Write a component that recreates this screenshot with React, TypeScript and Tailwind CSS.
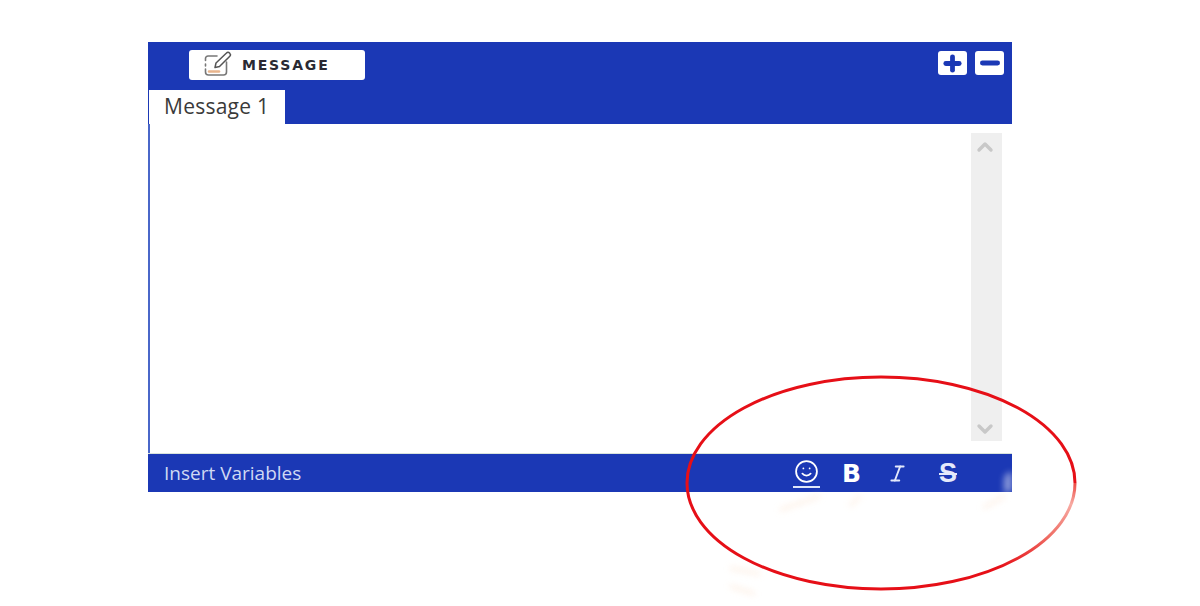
import { Minus, Plus, ChevronUp, ChevronDown, Smile, Italic } from "lucide-react";

const font = "font-['Open_Sans','Noto_Sans',sans-serif]";

// ─── Pencil-on-note icon in the header button ─────────────────────────────────

function NoteIcon() {
  return (
    <svg width="30" height="28" viewBox="0 0 30 28" fill="none">
      <path
        d="M15 5H6a2.5 2.5 0 0 0-2.5 2.5v2M3.5 13v2M3.5 18v3a3 3 0 0 0 3 3h15a3 3 0 0 0 3-3v-10"
        stroke="#777"
        strokeWidth="1.6"
        strokeLinecap="round"
      />
      <path d="M7 20.5h10" stroke="#e8b48c" strokeWidth="2.5" strokeLinecap="round" />
      <path
        d="M13 16.5l1-4.5L24.5 2a2 2 0 0 1 3 0l.3.4a2 2 0 0 1 0 2.8L17.5 15.5z"
        stroke="#555"
        strokeWidth="1.5"
        strokeLinejoin="round"
      />
    </svg>
  );
}

function Scrollbar() {
  return (
    <div className="w-[31px] flex flex-col items-center justify-between bg-[#efefef] pt-[2px] pb-0">
      <ChevronUp size={24} strokeWidth={3.4} className="text-[#c8c8c8] -ml-[3px]" />
      <ChevronDown size={24} strokeWidth={3.4} className="text-[#c8c8c8] -ml-[3px]" />
    </div>
  );
}

function Footer() {
  return (
    <div className="relative h-[39px] flex items-center justify-between bg-[#1b38b5] pl-4 border-t border-[#d9e3dc]">
      <span className={`${font} text-[19px] text-[#cfd8f3]`}>Insert Variables</span>
      <div className="flex items-center text-white mr-[54px]">
        <span className="flex flex-col items-center border-b-2 border-[#dfe6fa] pb-0.5 w-[27px]">
          <Smile size={25} strokeWidth={1.7} />
        </span>
        <span className="ml-[22px] w-[20px] font-['DejaVu_Sans',sans-serif] font-bold text-[25px] leading-none">B</span>
        <span className="ml-[25px] text-[#e4e9fb]">
          <Italic size={21} strokeWidth={2.2} />
        </span>
        <span className="ml-[31px] w-[19px] font-['Liberation_Sans',sans-serif] font-bold line-through text-[27px] leading-none text-[#e4e9fb]">
          S
        </span>
      </div>
      {/* Eraser smudge at the bar's right end */}
      <span className="absolute right-0 top-[18px] bottom-0 w-[8px] rounded-tl-full bg-white/50 blur-[3px]" />
    </div>
  );
}

export default function App() {
  return (
    <div className="relative w-[1200px] h-[606px] bg-white overflow-hidden pt-[42px] pl-[148px]">
      <div className="w-[864px] h-[450px] flex flex-col border-l-2 border-[#4a67c9]">
        {/* Header with the title button and the tab strip */}
        <div className="h-[82px] flex flex-col justify-between bg-[#1b38b5] -ml-[2px]">
          <div className="flex items-start justify-between pt-[8px] pl-[41px] pr-[8px]">
            <div className="w-[176px] h-[30px] flex items-center gap-[10px] rounded-[3px] bg-white pl-[13px]">
              <NoteIcon />
              <span className="font-['DejaVu_Sans',sans-serif] font-bold text-[14px] tracking-[1.8px] text-[#2a2a33]">
                MESSAGE
              </span>
            </div>
            <div className="flex gap-[8px] pt-[1px]">
              <span className="w-[29px] h-[24px] flex items-center justify-center rounded-[3px] bg-white text-[#1b38b5]">
                <Plus size={23} strokeWidth={5} />
              </span>
              <span className="w-[29px] h-[24px] flex items-center justify-center rounded-[3px] bg-white text-[#1b38b5]">
                <Minus size={26} strokeWidth={4.5} />
              </span>
            </div>
          </div>
          <div className={`${font} ml-[1px] w-[136px] h-[34px] flex items-center pl-[15px] bg-white text-[21px] tracking-[0.25px] text-[#3a3a3a]`}>
            Message 1
          </div>
        </div>

        {/* Empty message area */}
        <div className="flex-1 flex justify-end bg-white pt-[9px] pr-[10px] pb-[12px]">
          <Scrollbar />
        </div>

        <div className="-ml-[2px]">
          <Footer />
        </div>
      </div>

      {/* Red hand-drawn ellipse over the toolbar, with its eraser marks */}
      <svg className="absolute left-[670px] top-[360px]" width="420" height="246" viewBox="0 0 420 246" fill="none">
        <defs>
          <linearGradient id="fade" x1="0" y1="0" x2="0" y2="1">
            <stop offset="0" stopColor="#ec4a44" />
            <stop offset="0.2" stopColor="#f7aaa2" />
            <stop offset="0.5" stopColor="#ef6f66" />
            <stop offset="0.8" stopColor="#e60f17" />
            <stop offset="1" stopColor="#e60f17" />
          </linearGradient>
          <filter id="soft">
            <feGaussianBlur stdDeviation="3" />
          </filter>
        </defs>
        <path d="M17 123A194 106 0 0 1 405 123" stroke="#e60f17" strokeWidth="3" />
        <path d="M17 123A194 106 0 0 0 211 229" stroke="#e60f17" strokeWidth="3" />
        <path d="M211 229A194 106 0 0 0 405 123" stroke="url(#fade)" strokeWidth="3" />
        <g stroke="#fbe3cf" strokeWidth="3" filter="url(#soft)" opacity="0.6">
          <path d="M150 136l-40 14" />
          <path d="M190 136l-10 10" />
          <path d="M335 136l-22 12" />
          <path d="M90 214l-30 -6" />
          <path d="M60 226l25 8" />
        </g>
      </svg>
    </div>
  );
}
